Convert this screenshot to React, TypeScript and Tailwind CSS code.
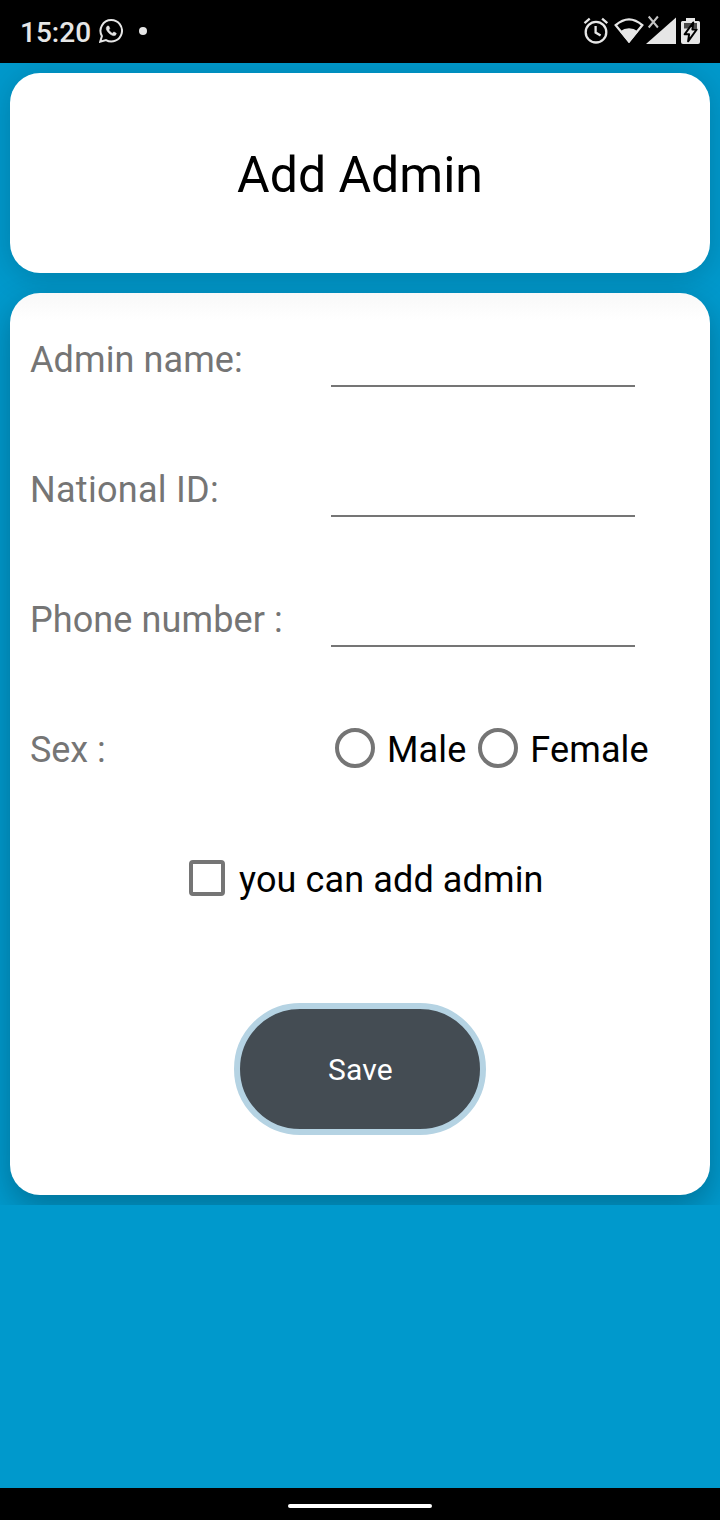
import React from "react";

function StatusBar() {
  return (
    <header className="flex h-[63px] items-center justify-between bg-black pl-5 pr-[19px] text-[#e6e6e6]">
      <div className="flex items-center">
        <span className="w-[71px] whitespace-nowrap pt-[2px] text-[28px] font-medium leading-[33px]">15:20</span>
        <svg className="relative -top-px ml-2 h-6 w-6" viewBox="0 0 24 24" fill="currentColor">
          <path d="M16.75 13.96c.25.13.41.2.46.3.06.11.04.61-.21 1.18-.2.56-1.24 1.1-1.7 1.12-.46.02-.47.36-2.96-.73-2.49-1.09-3.99-3.75-4.11-3.92-.12-.17-.96-1.38-.92-2.61.05-1.22.69-1.8.95-2.04.24-.26.51-.29.68-.26h.47c.15 0 .36-.06.55.45l.69 1.87c.06.13.1.28.01.44l-.27.41-.39.42c-.12.12-.26.25-.12.5.12.26.62 1.09 1.32 1.78.91.88 1.71 1.17 1.95 1.3.24.14.39.12.54-.04l.81-.94c.19-.25.35-.19.58-.11l1.67.88z" stroke="currentColor" strokeWidth="0.6" />
          <path d="M12.2 1.1A10.7 10.7 0 0 0 2.9 17.1L1.2 22.7 7 21.1A10.7 10.7 0 1 0 12.2 1.1z" fill="none" stroke="currentColor" strokeWidth="2" />
        </svg>
        <span className="relative -top-px ml-4 h-2 w-2 rounded-full bg-[#e6e6e6]" />
      </div>
      <svg className="mb-[3px] h-[30px] w-[118px]" viewBox="583 15 118 30" fill="none">
        <g stroke="#e6e6e6" strokeWidth="2.3">
          <circle cx="596" cy="32.2" r="10.3" />
          <path d="M595.6 26v6.5l5 3M584.500 23.200l5.200-4.500M607.300 23.200l-5.200-4.500" />
          <path d="M615.700 25.200Q629 13.500 642.300 25.200L629 41.400Z" />
        </g>
        <path d="M619.800 31.500Q629 25 638.200 31.500L629 43Z" fill="#e6e6e6" />
        <path d="M646 44L676 17.500V44Z" fill="#e6e6e6" />
        <path d="M648.700 16.500l9.200 11M657.900 16.500l-9.200 11" stroke="#c4c4c4" strokeWidth="2" />
        <path d="M686 18h9v3h3.500q1.500 0 1.500 1.500V42q0 2-2 2h-15q-2 0-2-2V22.500q0-1.500 1.500-1.500h3.500Z" fill="#e6e6e6" />
        <path d="M684 23h13v5.500h-13Z" fill="#4b4b4b" />
        <path d="M693.200 22.500L684.600 34.300h4.500l-1 7L696.700 29.500h-4.300Z" fill="#e6e6e6" stroke="#000" strokeWidth="2" strokeLinejoin="round" />
      </svg>
    </header>
  );
}

function Field({ label, tracking = "tracking-[0.1px]" }: { label: string; tracking?: string }) {
  return (
    <label className="flex h-[130px] items-start">
      <span className={`w-[297px] whitespace-nowrap pt-px text-[36px] leading-[42px] text-[#757575] ${tracking}`}>{label}</span>
      <input className="ml-1 h-[49px] w-[304px] border-b-2 border-[#757575] bg-transparent text-[36px] text-black outline-none" />
    </label>
  );
}

function Radio({ label }: { label: string }) {
  return (
    <label className="flex items-center">
      <input type="radio" name="sex" className="relative -top-[2px] h-10 w-10 shrink-0 appearance-none rounded-full border-4 border-[#757575]" />
      <span className="ml-3 whitespace-nowrap">{label}</span>
    </label>
  );
}

export default function App() {
  return (
    <div className="flex h-[1520px] w-[720px] flex-col overflow-hidden bg-[#0099cc] font-['Roboto',sans-serif]">
      <StatusBar />
      <main className="flex h-[1142px] flex-col gap-5 overflow-hidden p-[10px]">
        <section className="flex h-[200px] shrink-0 items-center justify-center rounded-[30px] bg-white shadow-[0_4px_32px_rgba(0,0,0,0.18)]">
          <h1 className="pt-1 text-[50px] leading-[58px] text-black">Add Admin</h1>
        </section>
        <section className="flex h-[902px] shrink-0 flex-col rounded-[30px] bg-white bg-[linear-gradient(#f8f8f8,#ffffff_28px)] px-5 pt-[45px] shadow-[0_12px_32px_rgba(0,0,0,0.26)]">
          <Field label="Admin name:" />
          <Field label="National ID:" tracking="tracking-[0.28px]" />
          <Field label="Phone number :" />
          <div className="flex h-[130px] items-start pt-px text-[36px] leading-[42px] tracking-[0.12px]">
            <span className="w-[305px] tracking-[-0.05px] text-[#757575]">Sex :</span>
            <div className="flex gap-3 text-black">
              <Radio label="Male" />
              <Radio label="Female" />
            </div>
          </div>
          <label className="ml-[159px] flex items-center pt-px text-[36px] leading-[42px] tracking-[0.12px] text-black">
            <input type="checkbox" className="relative -top-[2px] h-9 w-9 shrink-0 appearance-none rounded-[4px] border-4 border-[#757575]" />
            <span className="ml-[14px] whitespace-nowrap">you can add admin</span>
          </label>
          <button className="mt-[102px] flex h-[132px] w-[252px] items-center justify-center self-center rounded-full border-[6px] border-[#b5d3e3] bg-[#444c53] pl-px text-[30px] leading-[35px] tracking-[0.2px] text-white">
            Save
          </button>
        </section>
      </main>
      <div className="flex-1" />
      <footer className="flex h-8 items-center justify-center bg-black pt-1">
        <div className="h-1 w-36 rounded-full bg-white" />
      </footer>
    </div>
  );
}
